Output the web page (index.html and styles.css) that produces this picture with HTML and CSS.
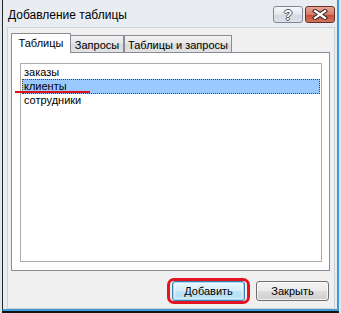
FILE: index.html
```html
<!DOCTYPE html>
<html>
  <head>
    <title>Добавление таблицы</title>
    <link rel="stylesheet" href="styles.css">
  </head>
  <body>
    <div id="window">
      <div id="titleBar">
        <span class="caption">Добавление таблицы</span>
        <div class="captionButtons">
          <a class="help">?</a>
          <a class="close">
            <svg width="16" height="11" viewBox="0 0 16 11">
              <path d="M3 2 L13 9 M13 2 L3 9" stroke="#3a2420" stroke-width="4.2" stroke-linecap="square"/>
              <path d="M3 2 L13 9 M13 2 L3 9" stroke="#fff" stroke-width="2.2" stroke-linecap="square"/>
            </svg>
          </a>
        </div>
      </div>
      <div id="client">
        <ul class="tabs">
          <li class="active first">Таблицы</li>
          <li class="second">Запросы</li>
          <li class="third">Таблицы и запросы</li>
        </ul>
        <div class="tabPage">
          <ul class="list">
            <li>заказы</li>
            <li class="selected">клиенты</li>
            <li>сотрудники</li>
          </ul>
          <span class="mark"></span>
        </div>
        <div class="buttons">
          <span class="ringed">
            <button class="default">Добавить</button>
            <span class="ring"></span>
          </span>
          <button>Закрыть</button>
        </div>
      </div>
    </div>
  </body>
</html>
```

FILE: styles.css
```css
body {
  margin: 0;
  padding: 0;
  width: 341px;
  height: 313px;
  overflow: hidden;
  background: #dfe8f1;
  font-family: "Liberation Sans", Arial, sans-serif;
  font-size: 11px;
  color: #000;
}
ul {
  list-style: none;
  margin: 0;
  padding: 0;
}

#window {
  box-sizing: border-box;
  margin-left: 2px;
  width: 337px;
  height: 311px;
  border-left: 1px solid #262626;
  border-right: 2px solid #3d9ad6;
  border-bottom: 2px solid #3d9ad6;
  box-shadow: 0 2px 0 #151515;
  background: #e9edf1;
  display: flex;
  flex-direction: column;
}

#titleBar {
  height: 28px;
  display: flex;
  align-items: flex-start;
  justify-content: space-between;
}
.caption {
  font-size: 12px;
  line-height: 14px;
  padding: 8px 0 0 5px;
}
.captionButtons {
  display: flex;
  gap: 2px;
  margin: 6px 2px 0 0;
}
.captionButtons a {
  box-sizing: border-box;
  width: 30px;
  height: 17px;
  border-radius: 3px;
  display: flex;
  align-items: center;
  justify-content: center;
}
.help {
  border: 1px solid #7d8794;
  background: linear-gradient(#f7f8fa, #e3e7ec 50%, #d3d9e0 51%, #dde2e8);
  color: #fff;
  font-weight: bold;
  font-size: 14px;
  line-height: 14px;
  text-shadow: 1px 0 #4d5663, -1px 0 #4d5663, 0 1px #4d5663, 0 -1px #4d5663;
}
.close {
  border: 1px solid #6b2f26;
  background: linear-gradient(#e6a797, #d77a68 50%, #c54a36 51%, #d0765f);
}

#client {
  flex: 1;
  margin: 0 3px 1px 5px;
  background: #f0f0f0;
  box-shadow: 0 0 0 1px #c9d1da;
  display: flex;
  flex-direction: column;
}

.tabs {
  display: flex;
  align-items: flex-end;
  padding: 5px 0 0 3px;
}
.tabs li {
  box-sizing: border-box;
  height: 17px;
  padding-top: 3px;
  line-height: 13px;
  text-align: center;
  border: 1px solid #898c95;
  border-bottom: none;
  background: linear-gradient(#f3f3f3, #e6e6e6 50%, #dadada 51%, #e3e3e3);
}
.tabs li.active {
  height: 20px;
  margin-bottom: -1px;
  background: #fff;
  position: relative;
  z-index: 1;
}
.tabs .first {
  width: 60px;
}
.tabs .second {
  width: 54px;
  margin-left: -1px;
}
.tabs .third {
  width: 108px;
}

.tabPage {
  box-sizing: border-box;
  position: relative;
  margin: 0 4px 0 3px;
  height: 219px;
  padding: 10px 7px 8px 8px;
  background: #fff;
  border: 1px solid #898c95;
  display: flex;
}
.list {
  flex: 1;
  border: 1px solid #acacac;
  padding: 1px;
}
.list li {
  height: 13px;
  line-height: 13px;
  padding-left: 1px;
  border: 1px solid transparent;
  margin: -1px 0;
}
.list li:first-child {
  margin-top: 0;
}
.list li.selected {
  background: #99c9ff;
  border: 1px dotted #6a3a08;
}
.mark {
  position: absolute;
  left: 3px;
  top: 38px;
  width: 75px;
  height: 2px;
  background: #e2121c;
}

.buttons {
  display: flex;
  justify-content: flex-end;
  gap: 11px;
  padding: 10px 5px 0 0;
}
button {
  box-sizing: border-box;
  width: 73px;
  height: 20px;
  padding: 0;
  font-family: "Liberation Sans", Arial, sans-serif;
  font-size: 11px;
  color: #000;
  border: 1px solid #707070;
  border-radius: 3px;
  background: linear-gradient(#f2f2f2, #ebebeb 50%, #dddddd 51%, #cfcfcf);
  box-shadow: inset 0 0 0 1px rgba(255,255,255,0.7);
}
button.default {
  border-color: #3c7fb1;
  background: linear-gradient(#e5f4fc, #d6eefb 50%, #bde4f8 51%, #b0dcf4);
  box-shadow: inset 0 0 0 1px #9fdbf7, inset 0 0 2px 2px rgba(255,255,255,0.6);
}
.ringed {
  position: relative;
  display: flex;
}
.ring {
  position: absolute;
  top: -3px;
  bottom: -3px;
  left: -5px;
  right: -5px;
  border: 3px solid #e3131f;
  border-radius: 7px;
}
```
